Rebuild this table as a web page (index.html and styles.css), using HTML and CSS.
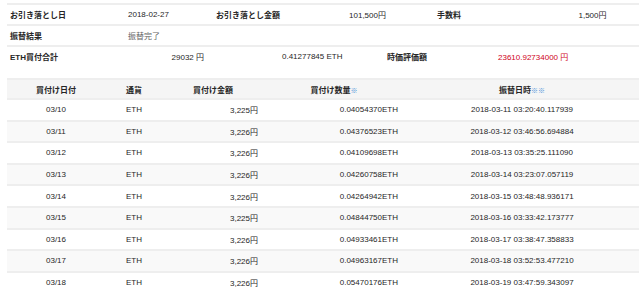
FILE: index.html
```html
<!DOCTYPE html>
<html lang="ja">
<head>
<meta charset="UTF-8" />
<title>引き落とし詳細</title>
<link rel="stylesheet" href="styles.css">
</head>
<body>
  <div class="page">
    <table class="summary">
      <colgroup>
        <col style="width:118px"><col style="width:88px"><col style="width:88px">
        <col style="width:133px"><col style="width:112px"><col style="width:93px">
      </colgroup>
      <tr>
        <th>お引き落とし日</th>
        <td>2018-02-27</td>
        <th>お引き落とし金額</th>
        <td class="center">101,500円</td>
        <th>手数料</th>
        <td class="center">1,500円</td>
      </tr>
      <tr>
        <th>振替結果</th>
        <td class="muted">振替完了</td>
        <td></td><td></td><td></td><td></td>
      </tr>
    </table>

    <table class="summary total">
      <colgroup>
        <col style="width:118px"><col style="width:85px"><col style="width:174px">
        <col style="width:111px"><col style="width:144px">
      </colgroup>
      <tr>
        <th>ETH買付合計</th>
        <td class="yen">29032 円</td>
        <td class="eth">0.41277845 ETH</td>
        <th>時価評価額</th>
        <td class="red">23610.92734000 円</td>
      </tr>
    </table>

    <table class="orders">
      <colgroup>
        <col style="width:98px"><col style="width:58px"><col style="width:100px">
        <col style="width:142px"><col style="width:234px">
      </colgroup>
      <thead>
        <tr>
          <th>買付け日付</th>
          <th>通貨</th>
          <th>買付け金額</th>
          <th>買付け数量<span class="note">※</span></th>
          <th>振替日時<span class="note">※※</span></th>
        </tr>
      </thead>
      <tbody>
        <tr><td>03/10</td><td>ETH</td><td class="num">3,225円</td><td class="qty">0.04054370ETH</td><td>2018-03-11 03:20:40.117939</td></tr>
        <tr><td>03/11</td><td>ETH</td><td class="num">3,226円</td><td class="qty">0.04376523ETH</td><td>2018-03-12 03:46:56.694884</td></tr>
        <tr><td>03/12</td><td>ETH</td><td class="num">3,226円</td><td class="qty">0.04109698ETH</td><td>2018-03-13 03:35:25.111090</td></tr>
        <tr><td>03/13</td><td>ETH</td><td class="num">3,226円</td><td class="qty">0.04260758ETH</td><td>2018-03-14 03:23:07.057119</td></tr>
        <tr><td>03/14</td><td>ETH</td><td class="num">3,226円</td><td class="qty">0.04264942ETH</td><td>2018-03-15 03:48:48.936171</td></tr>
        <tr><td>03/15</td><td>ETH</td><td class="num">3,225円</td><td class="qty">0.04844750ETH</td><td>2018-03-16 03:33:42.173777</td></tr>
        <tr><td>03/16</td><td>ETH</td><td class="num">3,226円</td><td class="qty">0.04933461ETH</td><td>2018-03-17 03:38:47.358833</td></tr>
        <tr><td>03/17</td><td>ETH</td><td class="num">3,226円</td><td class="qty">0.04963167ETH</td><td>2018-03-18 03:52:53.477210</td></tr>
        <tr><td>03/18</td><td>ETH</td><td class="num">3,226円</td><td class="qty">0.05470176ETH</td><td>2018-03-19 03:47:59.343097</td></tr>
      </tbody>
    </table>
  </div>
</body>
</html>
```

FILE: styles.css
```css
body {
  margin: 0;
  font-family: "Liberation Sans", "Noto Sans CJK JP", sans-serif;
  font-size: 8px;
  color: #262626;
  background: #fff;
}

.page {
  padding: 3px 0 0 7px;
}

table {
  width: 632px;
  border-collapse: collapse;
  table-layout: fixed;
}

th, td {
  padding: 0 3px;
  white-space: nowrap;
  text-align: left;
}

/* summary block */
.summary th, .summary td {
  height: 19px;
  border-top: 2px solid #eee;
}
.summary th { font-weight: bold; }
.summary .center { text-align: center; }
.summary .muted { color: #666; }

.total td.yen { text-align: right; padding-right: 6px; }
.total td.eth { padding-left: 72px; }
.total .red { color: #d0021b; }

/* orders */
.orders {
  margin-top: 12px;
}
.orders th, .orders td {
  text-align: center;
  border-top: 2px solid #eee;
}
.orders th {
  height: 18px;
  background: #f5f5f5;
  font-weight: bold;
}
.orders td { height: 19.6px; }
.orders tbody tr:nth-child(even) td { background: #f9f9f9; }
.orders td.num { text-align: right; padding-right: 5px; }
.orders td.qty { text-align: right; padding-right: 7px; }

.note {
  color: #4a90d9;
  font-size: 7px;
  font-weight: normal;
}
```
